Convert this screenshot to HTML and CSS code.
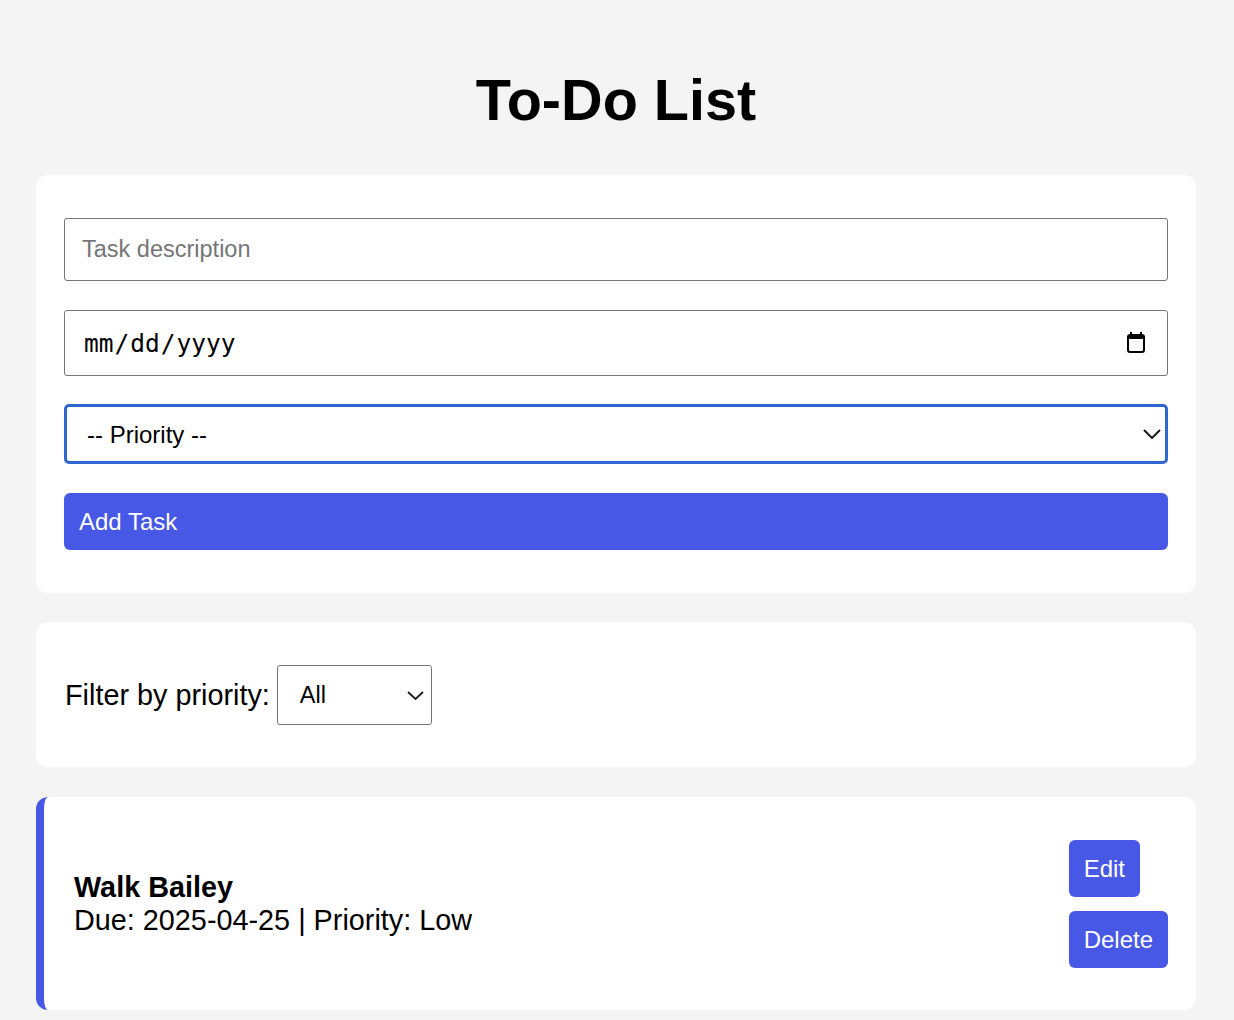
FILE: index.html
```html
<!DOCTYPE html>
<html lang="en">
<head>
<meta charset="utf-8">
<title>To-Do List</title>
<link rel="stylesheet" href="styles.css">
</head>
<body>
<main class="app">
  <h1 class="title">To-Do List</h1>

  <section class="card form-card">
    <input class="field text-field" type="text" placeholder="Task description">
    <div class="date-wrap">
      <input class="field date-field" type="date">
      <svg class="cal-icon" width="18" height="21" viewBox="0 0 18 21" aria-hidden="true">
        <rect x="3" y="0" width="2" height="4" fill="#000"/>
        <rect x="13" y="0" width="2" height="4" fill="#000"/>
        <rect x="1" y="3" width="16" height="17" rx="2" ry="2" fill="none" stroke="#000" stroke-width="2"/>
        <rect x="1" y="3" width="16" height="4" fill="#000"/>
      </svg>
    </div>
    <div class="select-wrap">
      <select class="field select-field focused">
        <option>-- Priority --</option>
        <option>Low</option>
        <option>Medium</option>
        <option>High</option>
      </select>
      <svg class="chevron chevron-lg" width="18" height="10" viewBox="0 0 18 10" aria-hidden="true">
        <polyline points="1,1 9,9 17,1" fill="none" stroke="#1a1a1a" stroke-width="2"/>
      </svg>
    </div>
    <button class="btn btn-block" type="button">Add Task</button>
  </section>

  <section class="card filter-card">
    <label class="filter-label">Filter by priority:</label>
    <div class="select-wrap small">
      <select class="filter-select">
        <option>All</option>
        <option>Low</option>
        <option>Medium</option>
        <option>High</option>
      </select>
      <svg class="chevron chevron-sm" width="17" height="9" viewBox="0 0 17 9" aria-hidden="true">
        <polyline points="1,1 8.5,8 16,1" fill="none" stroke="#1a1a1a" stroke-width="1.8"/>
      </svg>
    </div>
  </section>

  <section class="card task-card">
    <div class="task-info">
      <div class="task-name">Walk Bailey</div>
      <div class="task-meta">Due: 2025-04-25 | Priority: Low</div>
    </div>
    <div class="task-actions">
      <button class="btn btn-small" type="button">Edit</button>
      <button class="btn btn-small" type="button">Delete</button>
    </div>
  </section>
</main>
</body>
</html>
```

FILE: styles.css
```css
html {
  overflow: hidden;
}

body {
  margin: 0;
  background: #f4f4f4;
  font-family: "Liberation Sans", Arial, Helvetica, sans-serif;
  color: #000;
}

.app {
  width: 1160px;
  margin: 0 0 0 36px;
  display: flex;
  flex-direction: column;
}

.title {
  margin: 67px 0 42px;
  font-size: 57.6px;
  font-weight: 700;
  text-align: center;
  line-height: 66px;
}

.card {
  background: #fff;
  border-radius: 12px;
  box-sizing: border-box;
}

.form-card {
  padding: 43px 28px 43px;
  display: flex;
  flex-direction: column;
}

.field {
  display: block;
  width: 100%;
  box-sizing: border-box;
  margin: 0;
  border: 1px solid #767676;
  border-radius: 3px;
  background: #fff;
  color: #000;
  font-family: "Liberation Sans", Arial, sans-serif;
}

.text-field {
  height: 63px;
  padding: 0 17px;
  font-size: 23.5px;
  margin-bottom: 29px;
}

.text-field::placeholder {
  color: #757575;
}

.date-wrap {
  position: relative;
  margin-bottom: 28px;
}

.date-field {
  height: 66px;
  padding: 0 18px;
  font-family: "DejaVu Sans Mono", monospace;
  font-size: 24.5px;
}

.date-field::-webkit-calendar-picker-indicator {
  opacity: 0;
}

.date-field::-webkit-datetime-edit-fields-wrapper {
  padding: 0;
}

.cal-icon {
  position: absolute;
  right: 23px;
  top: 22px;
  pointer-events: none;
}

.select-wrap {
  position: relative;
  margin-bottom: 29px;
}

.select-field {
  -webkit-appearance: none;
  appearance: none;
  height: 60px;
  padding: 0 20px;
  font-size: 24px;
  outline: none;
}

.select-field.focused {
  border: 3px solid #2f66d0;
  border-radius: 5px;
}

.chevron {
  position: absolute;
  pointer-events: none;
}

.chevron-lg {
  right: 7px;
  top: 25px;
}

.btn {
  border: none;
  background: #4757e6;
  color: #fff;
  font-family: "Liberation Sans", Arial, sans-serif;
  font-size: 24px;
  line-height: 27px;
  padding: 15px;
  border-radius: 6px;
  cursor: pointer;
}

.btn-block {
  width: 100%;
  height: 57px;
  text-align: left;
}

.filter-card {
  margin-top: 29px;
  padding: 43px 28px 42px;
  display: flex;
  align-items: center;
  gap: 7px;
}

.filter-label {
  font-size: 28.8px;
  padding-left: 1px;
}

.select-wrap.small {
  margin: 0;
}

.filter-select {
  -webkit-appearance: none;
  appearance: none;
  width: 155px;
  height: 60px;
  box-sizing: border-box;
  border: 1px solid #767676;
  border-radius: 3px;
  background: #fff;
  color: #000;
  padding: 0 22px;
  font-family: "Liberation Sans", Arial, sans-serif;
  font-size: 23.5px;
  outline: none;
}

.chevron-sm {
  right: 8px;
  top: 26px;
}

.task-card {
  margin-top: 30px;
  border-left: 8px solid #4757e6;
  padding: 43px 28px 42px 30px;
  display: flex;
  align-items: center;
  justify-content: space-between;
}

.task-name {
  font-size: 28.8px;
  font-weight: 700;
}

.task-meta {
  font-size: 28.8px;
}

.task-actions {
  display: flex;
  flex-direction: column;
  align-items: flex-start;
  gap: 14px;
}

.btn-small {
  height: 57px;
  padding: 0 15px;
  font-size: 24px;
}
```
